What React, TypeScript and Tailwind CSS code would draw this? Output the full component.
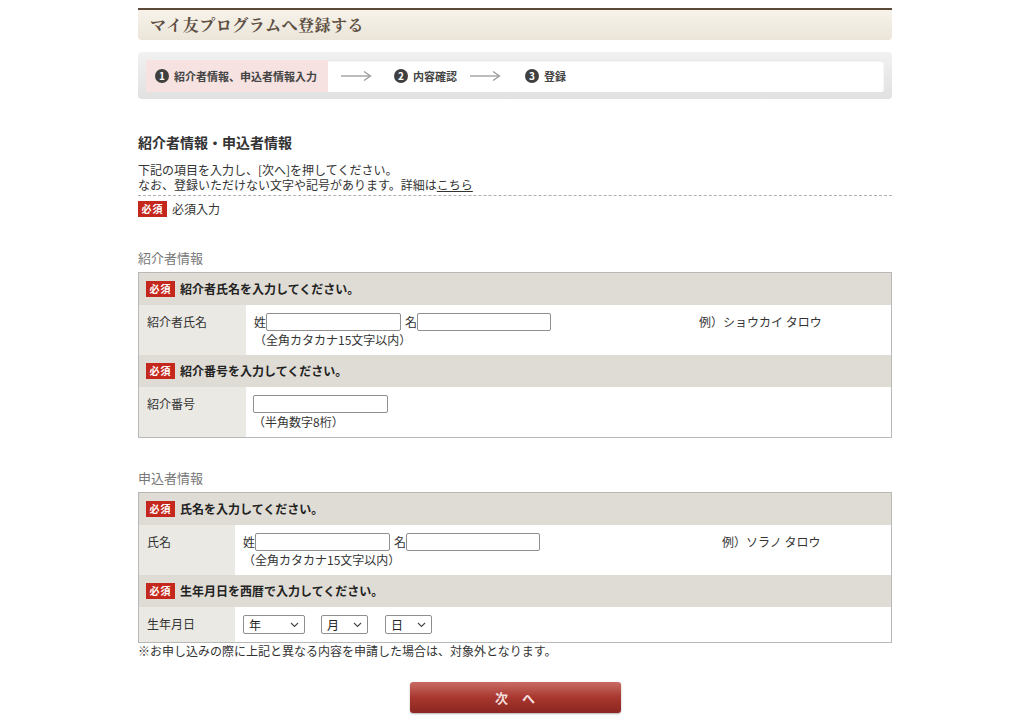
import React from "react";

const jp = { fontFamily: '"Noto Sans CJK JP", "Noto Sans", sans-serif' };

function Badge() {
  return (
    <span className="inline-flex items-center justify-center w-[29px] h-[16px] bg-[#c4281c] text-white text-[10px] font-bold leading-none tracking-[1px]">
      必須
    </span>
  );
}

function Arrow() {
  return (
    <svg width="32" height="12" viewBox="0 0 32 12" className="mx-[12px]">
      <line x1="1" y1="6" x2="30" y2="6" stroke="#9a9a9a" strokeWidth="1.3" />
      <path d="M24 1.5 L30.5 6 L24 10.5" fill="none" stroke="#9a9a9a" strokeWidth="1.3" />
    </svg>
  );
}

function StepNum({ n }: { n: number }) {
  return (
    <span className="inline-flex items-center justify-center w-[14px] h-[14px] rounded-full bg-[#3f3f3f] text-white text-[10px] font-bold leading-none mr-[5px]">
      {n}
    </span>
  );
}

function Input({ w }: { w: number }) {
  return (
    <input
      type="text"
      style={{ width: w }}
      className="h-[18px] border border-[#8f8f8f] rounded-[2px] bg-white outline-none"
    />
  );
}

function Select({ label, w }: { label: string; w: number }) {
  return (
    <div
      style={{ width: w }}
      className="h-[19px] border border-[#8f8f8f] rounded-[2px] bg-white flex items-center justify-between px-[5px] text-[12px] text-[#222]"
    >
      <span>{label}</span>
      <svg width="9" height="6" viewBox="0 0 9 6">
        <path d="M1 1 L4.5 4.5 L8 1" fill="none" stroke="#444" strokeWidth="1.1" />
      </svg>
    </div>
  );
}

function HeaderRow({ text }: { text: string }) {
  return (
    <div className="h-[32px] bg-[#dfdcd5] flex items-center pl-[7px] gap-[5px]">
      <Badge />
      <span className="text-[12px] font-bold text-[#222]">{text}</span>
    </div>
  );
}

export default function App() {
  return (
    <div style={jp} className="w-[1024px] min-h-[723px] bg-white text-[#333]">
      <div className="w-[754px] ml-[138px] pt-[8px]">
        {/* Title bar */}
        <div className="h-[32px] border-t-[2px] border-[#5b4a3a] rounded-b-[4px] bg-gradient-to-b from-[#f7f3ea] to-[#ebe5d9] flex items-center pl-[12px]">
          <span
            style={{ fontFamily: '"Noto Serif CJK JP", "Liberation Serif", serif' }}
            className="text-[16px] font-bold text-[#5d4e42] tracking-[0.5px]"
          >
            マイ友プログラムへ登録する
          </span>
        </div>

        {/* Step bar */}
        <div className="mt-[12px] h-[47px] rounded-[4px] bg-gradient-to-b from-[#f1f1f1] to-[#e1e1e1] pt-[8px] pb-[7px] px-[8px]">
          <div className="h-[32px] bg-white rounded-[2px] flex items-center shadow-[inset_0_1px_2px_rgba(0,0,0,0.12)]">
            <div className="h-full w-[182px] bg-[#f6e2e1] flex items-center pl-[9px] text-[11px] font-bold text-[#444]">
              <StepNum n={1} />
              紹介者情報、申込者情報入力
            </div>
            <Arrow />
            <div className="flex items-center ml-[10px] text-[11px] font-bold text-[#444]">
              <StepNum n={2} />
              内容確認
            </div>
            <Arrow />
            <div className="flex items-center ml-[12px] text-[11px] font-bold text-[#444]">
              <StepNum n={3} />
              登録
            </div>
          </div>
        </div>

        {/* Heading */}
        <h1 className="mt-[33px] text-[14px] font-bold leading-[20px] text-[#333]">紹介者情報・申込者情報</h1>
        <div className="mt-[10px] text-[12px] leading-[15px] text-[#333]">
          <p>下記の項目を入力し、[次へ]を押してください。</p>
          <p>
            なお、登録いただけない文字や記号があります。詳細は
            <span className="underline">こちら</span>
          </p>
        </div>
        <div className="mt-[3px] border-t border-dashed border-[#b0b0b0]" />
        <div className="mt-[4px] flex items-center gap-[5px] text-[12px]">
          <Badge />
          <span>必須入力</span>
        </div>

        {/* Section 1 */}
        <h2 className="mt-[31px] text-[13px] leading-[18px] text-[#777]">紹介者情報</h2>
        <div className="mt-[5px] border border-[#b8b8b8]">
          <HeaderRow text="紹介者氏名を入力してください。" />
          <div className="flex h-[50px]">
            <div className="w-[107px] bg-[#ebe9e4] pl-[8px] pt-[8px] text-[12px]">紹介者氏名</div>
            <div className="flex-1 bg-white pl-[8px] pt-[8px] text-[12px]">
              <div className="flex items-center">
                <span>姓</span>
                <Input w={135} />
                <span className="ml-[4px]">名</span>
                <Input w={134} />
                <span className="ml-[148px]">例）ショウカイ タロウ</span>
              </div>
              <div className="mt-[1px] leading-[16px]">（全角カタカナ15文字以内）</div>
            </div>
          </div>
          <HeaderRow text="紹介番号を入力してください。" />
          <div className="flex h-[50px]">
            <div className="w-[107px] bg-[#ebe9e4] pl-[8px] pt-[8px] text-[12px]">紹介番号</div>
            <div className="flex-1 bg-white pl-[7px] pt-[8px] text-[12px]">
              <Input w={135} />
              <div className="mt-[1px] leading-[16px]">（半角数字8桁）</div>
            </div>
          </div>
        </div>

        {/* Section 2 */}
        <h2 className="mt-[31px] text-[13px] leading-[18px] text-[#777]">申込者情報</h2>
        <div className="mt-[5px] border border-[#b8b8b8]">
          <HeaderRow text="氏名を入力してください。" />
          <div className="flex h-[50px]">
            <div className="w-[96px] bg-[#ebe9e4] pl-[8px] pt-[8px] text-[12px]">氏名</div>
            <div className="flex-1 bg-white pl-[8px] pt-[8px] text-[12px]">
              <div className="flex items-center">
                <span>姓</span>
                <Input w={135} />
                <span className="ml-[4px]">名</span>
                <Input w={134} />
                <span className="ml-[182px]">例）ソラノ タロウ</span>
              </div>
              <div className="mt-[1px] leading-[16px]">（全角カタカナ15文字以内）</div>
            </div>
          </div>
          <HeaderRow text="生年月日を西暦で入力してください。" />
          <div className="flex h-[35px]">
            <div className="w-[96px] bg-[#ebe9e4] pl-[8px] pt-[8px] text-[12px]">生年月日</div>
            <div className="flex-1 bg-white pl-[8px] pt-[8px] flex items-start">
              <Select label="年" w={62} />
              <div className="ml-[16px]"><Select label="月" w={47} /></div>
              <div className="ml-[17px]"><Select label="日" w={47} /></div>
            </div>
          </div>
        </div>
        <p className="text-[12px] leading-[16px] text-[#333]">
          ※お申し込みの際に上記と異なる内容を申請した場合は、対象外となります。
        </p>

        {/* Button */}
        <div className="mt-[23px] flex justify-center">
          <button className="w-[211px] h-[31px] rounded-[3px] bg-gradient-to-b from-[#c86b64] via-[#a8372f] to-[#8b2620] text-[#f3dede] text-[13px] font-bold tracking-[14px] pl-[14px] shadow-[0_1px_2px_rgba(0,0,0,0.3)]">
            次へ
          </button>
        </div>
      </div>
    </div>
  );
}
